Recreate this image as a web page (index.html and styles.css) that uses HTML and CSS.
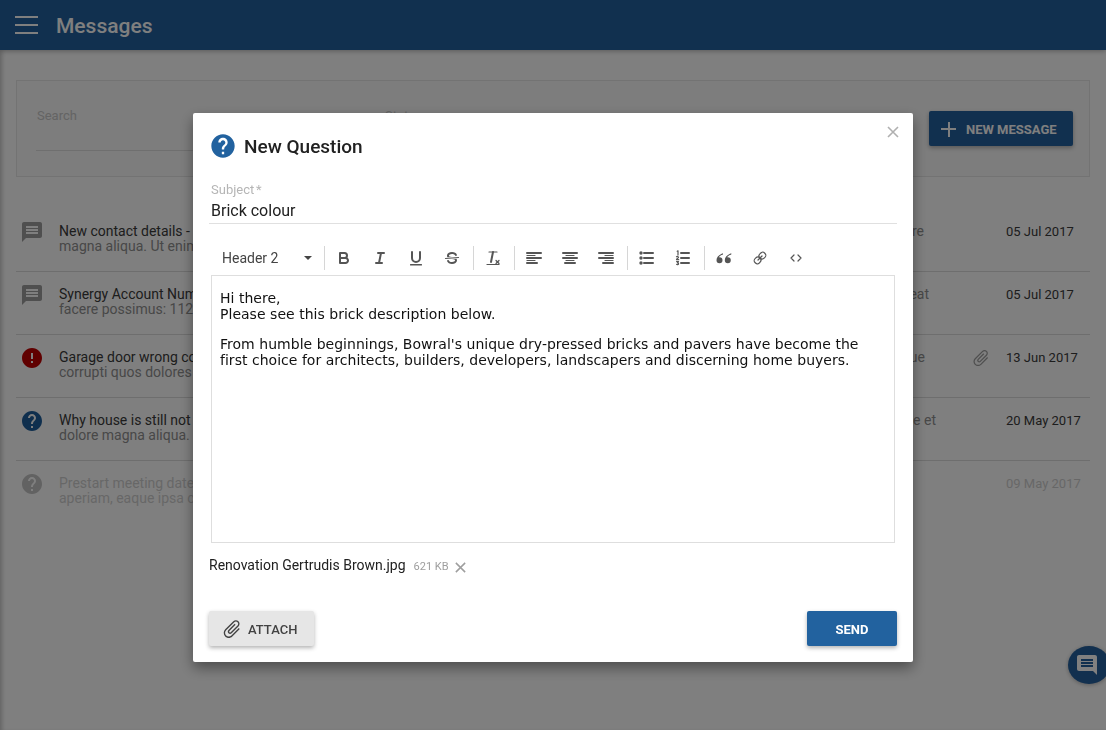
FILE: index.html
```html
<!DOCTYPE html>
<html lang="en">
<head>
<meta charset="utf-8">
<title>Messages</title>
<link rel="stylesheet" href="styles.css">
</head>
<body>
<svg class="defs" aria-hidden="true">
  <symbol id="i-chat" viewBox="0 0 24 24"><path d="M20 2H4c-1.1 0-1.99.9-1.99 2L2 22l4-4h14c1.1 0 2-.9 2-2V4c0-1.1-.9-2-2-2zm-2 12H6v-2h12v2zm0-3H6V9h12v2zm0-3H6V6h12v2z"/></symbol>
  <symbol id="i-help" viewBox="0 0 24 24"><path d="M12 2C6.48 2 2 6.48 2 12s4.48 10 10 10 10-4.48 10-10S17.52 2 12 2zm1 17h-2v-2h2v2zm2.07-7.75l-.9.92C13.45 12.9 13 13.5 13 15h-2v-.5c0-1.1.45-2.1 1.17-2.83l1.24-1.26c.37-.36.59-.86.59-1.41 0-1.1-.9-2-2-2s-2 .9-2 2H8c0-2.21 1.79-4 4-4s4 1.79 4 4c0 .88-.36 1.68-.93 2.25z"/></symbol>
  <symbol id="i-error" viewBox="0 0 24 24"><path d="M12 2C6.48 2 2 6.48 2 12s4.48 10 10 10 10-4.48 10-10S17.52 2 12 2zm1 15h-2v-2h2v2zm0-4h-2V7h2v6z"/></symbol>
  <symbol id="i-attach" viewBox="0 0 24 24"><path transform="rotate(45 12 12)" d="M16.5 6v11.5c0 2.21-1.79 4-4 4s-4-1.79-4-4V5c0-1.38 1.12-2.5 2.5-2.5s2.5 1.12 2.5 2.5v10.5c0 .55-.45 1-1 1s-1-.45-1-1V6H10v9.5c0 1.38 1.12 2.5 2.5 2.5s2.5-1.12 2.5-2.5V5c0-2.21-1.79-4-4-4S7 2.79 7 5v12.5c0 3.04 2.46 5.5 5.5 5.5s5.5-2.46 5.5-5.5V6h-1.5z"/></symbol>
  <symbol id="i-close" viewBox="0 0 14 14"><path d="M2 2l10 10M12 2L2 12" fill="none" stroke="currentColor" stroke-width="1.6"/></symbol>
</svg>

<div class="page">
  <header class="topbar">
    <span class="burger"><i></i><i></i><i></i></span>
    <h1 class="page-title">Messages</h1>
  </header>

  <main class="content">
    <section class="filters">
      <div class="field field-search"><span class="field-label">Search</span></div>
      <div class="field field-status"><span class="field-label">Status</span></div>
      <button class="btn btn-new" type="button"><span class="plus"></span>NEW MESSAGE</button>
    </section>

    <ul class="messages">
      <li class="message">
        <svg class="msg-icon icon-grey"><use href="#i-chat"/></svg>
        <div class="msg-body">
          <div class="msg-title">New contact details -</div>
          <div class="msg-text"><span class="msg-sub">magna aliqua. Ut enim</span><span class="msg-tail tail-a">re</span></div>
        </div>
        <div class="msg-clip"></div>
        <time class="msg-date">05 Jul 2017</time>
      </li>
      <li class="message">
        <svg class="msg-icon icon-grey"><use href="#i-chat"/></svg>
        <div class="msg-body">
          <div class="msg-title">Synergy Account Num</div>
          <div class="msg-text"><span class="msg-sub">facere possimus: 112</span><span class="msg-tail tail-b">eat</span></div>
        </div>
        <div class="msg-clip"></div>
        <time class="msg-date">05 Jul 2017</time>
      </li>
      <li class="message">
        <svg class="msg-icon icon-red"><use href="#i-error"/></svg>
        <div class="msg-body">
          <div class="msg-title">Garage door wrong co</div>
          <div class="msg-text"><span class="msg-sub">corrupti quos dolores</span><span class="msg-tail tail-c">ue</span></div>
        </div>
        <div class="msg-clip"><svg class="clip-icon"><use href="#i-attach"/></svg></div>
        <time class="msg-date">13 Jun 2017</time>
      </li>
      <li class="message">
        <svg class="msg-icon icon-blue"><use href="#i-help"/></svg>
        <div class="msg-body">
          <div class="msg-title">Why house is still not</div>
          <div class="msg-text"><span class="msg-sub">dolore magna aliqua.</span><span class="msg-tail tail-d">e et</span></div>
        </div>
        <div class="msg-clip"></div>
        <time class="msg-date">20 May 2017</time>
      </li>
      <li class="message message-read">
        <svg class="msg-icon icon-faint"><use href="#i-help"/></svg>
        <div class="msg-body">
          <div class="msg-title">Prestart meeting date</div>
          <div class="msg-text"><span class="msg-sub">aperiam, eaque ipsa c</span></div>
        </div>
        <div class="msg-clip"></div>
        <time class="msg-date">09 May 2017</time>
      </li>
    </ul>
  </main>
</div>

<div class="overlay"></div>

<button class="fab" type="button" aria-label="Chat"><svg class="fab-icon"><use href="#i-chat"/></svg></button>

<div class="modal" role="dialog">
  <button class="modal-close" type="button" aria-label="Close"><svg class="close-icon"><use href="#i-close"/></svg></button>
  <div class="modal-head">
    <svg class="modal-icon"><use href="#i-help"/></svg>
    <h2 class="modal-title">New Question</h2>
  </div>

  <div class="subject">
    <label class="subject-label">Subject *</label>
    <div class="subject-value">Brick colour</div>
  </div>

  <div class="toolbar">
    <div class="picker"><span>Header 2</span><span class="caret"></span></div>
    <span class="sep"></span>
    <svg class="tb tb-first" viewBox="0 0 18 18"><path class="s" d="M5,4H9.5A2.5,2.5,0,0,1,12,6.5v0A2.5,2.5,0,0,1,9.5,9H5V4Z"/><path class="s" d="M5,9h5.5A2.5,2.5,0,0,1,13,11.5v0A2.5,2.5,0,0,1,10.5,14H5V9Z"/></svg>
    <svg class="tb" viewBox="0 0 18 18"><line class="s" x1="7" x2="13" y1="4" y2="4"/><line class="s" x1="5" x2="11" y1="14" y2="14"/><line class="s" x1="8" x2="10" y1="14" y2="4"/></svg>
    <svg class="tb" viewBox="0 0 18 18"><path class="s" d="M5,3V9a4,4,0,0,0,4,4H9a4,4,0,0,0,4-4V3"/><rect class="f" height="1.4" rx=".5" width="12" x="3" y="15"/></svg>
    <svg class="tb" viewBox="0 0 18 18"><line class="t" x1="15.5" x2="2.5" y1="8.5" y2="9.5"/><path class="f" d="M9.007,8C6.542,7.791,6,7.519,6,6.5,6,5.792,7.283,5,9,5c1.571,0,2.765.679,2.969,1.309a1,1,0,0,0,1.9-.617C13.356,4.106,11.354,3,9,3,6.2,3,4,4.538,4,6.5a3.2,3.2,0,0,0,.5,1.843Z"/><path class="f" d="M8.984,10C11.457,10.208,12,10.479,12,11.5c0,.708-1.283,1.5-3,1.5-1.571,0-2.765-.679-2.969-1.309a1,1,0,1,0-1.9.617C4.644,13.894,6.646,15,9,15c2.8,0,5-1.538,5-3.5a3.2,3.2,0,0,0-.5-1.843Z"/></svg>
    <span class="sep"></span>
    <svg class="tb tb-first" viewBox="0 0 18 18"><line class="t" x1="5" x2="13" y1="3" y2="3"/><line class="s" x1="9" x2="7" y1="3" y2="13"/><line class="t" x1="3" x2="15" y1="15.5" y2="15.5"/><line class="t" x1="12" x2="15" y1="11.5" y2="14.5"/><line class="t" x1="15" x2="12" y1="11.5" y2="14.5"/></svg>
    <span class="sep"></span>
    <svg class="tb tb-first" viewBox="0 0 18 18"><line class="s" x1="2" x2="16" y1="9" y2="9"/><line class="s" x1="2" x2="12" y1="14" y2="14"/><line class="s" x1="2" x2="16" y1="4" y2="4"/><line class="t" x1="2" x2="10" y1="6.5" y2="6.5"/><line class="t" x1="2" x2="10" y1="11.5" y2="11.5"/></svg>
    <svg class="tb" viewBox="0 0 18 18"><line class="s" x1="2" x2="16" y1="9" y2="9"/><line class="s" x1="4" x2="14" y1="14" y2="14"/><line class="s" x1="2" x2="16" y1="4" y2="4"/><line class="t" x1="5" x2="13" y1="6.5" y2="6.5"/><line class="t" x1="5" x2="13" y1="11.5" y2="11.5"/></svg>
    <svg class="tb" viewBox="0 0 18 18"><line class="s" x1="16" x2="2" y1="9" y2="9"/><line class="s" x1="16" x2="6" y1="14" y2="14"/><line class="s" x1="16" x2="2" y1="4" y2="4"/><line class="t" x1="8" x2="16" y1="6.5" y2="6.5"/><line class="t" x1="8" x2="16" y1="11.5" y2="11.5"/></svg>
    <span class="sep"></span>
    <svg class="tb tb-first" viewBox="0 0 18 18"><line class="s" x1="6" x2="15" y1="4" y2="4"/><line class="s" x1="6" x2="15" y1="9" y2="9"/><line class="s" x1="6" x2="15" y1="14" y2="14"/><circle class="f" cx="3" cy="4" r="1.7"/><circle class="f" cx="3" cy="9" r="1.7"/><circle class="f" cx="3" cy="14" r="1.7"/></svg>
    <svg class="tb" viewBox="0 0 18 18"><line class="s" x1="7" x2="15" y1="4" y2="4"/><line class="s" x1="7" x2="15" y1="9" y2="9"/><line class="s" x1="7" x2="15" y1="14" y2="14"/><path class="t" d="M3.2 2.2L4 1.8V6M2.5 7.8c.3-.5 2-.5 2 .4 0 .8-2 1.400-2 2.500h2.200M2.600 12.600h1.900l-1 1.300c.8 0 1.100.4 1.100.9 0 .9-1.500 1-2 .5"/></svg>
    <span class="sep"></span>
    <svg class="tb tb-first" viewBox="0 0 18 18"><path class="f" d="M8 4.200C4.600 5.300 1.500 7.800 1.500 11.300a3 3 0 1 0 3-3c-.3 0-.5 0-.7.100C4.400 7.200 5.800 6.200 8 5.500z"/><path class="f" d="M16.300 4.200c-3.400 1.100-6.500 3.600-6.500 7.100a3 3 0 1 0 3-3c-.3 0-.5 0-.7.100.6-1.200 2-2.200 4.200-2.900z"/></svg>
    <svg class="tb" viewBox="0 0 18 18"><g transform="matrix(-1 0 0 1 18 0)"><line class="t" x1="7" x2="11" y1="7" y2="11"/><path class="t" d="M8.900,4.577a3.476,3.476,0,0,1,.36,4.679A3.476,3.476,0,0,1,4.577,8.900C3.185,7.500,2.035,6.400,4.217,4.217S7.500,3.185,8.900,4.577Z"/><path class="t" d="M13.423,9.100a3.476,3.476,0,0,0-4.679-.36,3.476,3.476,0,0,0,.36,4.679c1.392,1.392,2.500,2.542,4.679.36S14.815,10.500,13.423,9.100Z"/></g></svg>
    <svg class="tb" viewBox="0 0 18 18"><polyline class="t" points="7 6 4 9 7 12"/><polyline class="t" points="11 6 14 9 11 12"/></svg>
  </div>

  <div class="editor">
    <p>Hi there,<br>Please see this brick description below.</p>
    <p>From humble beginnings, Bowral's unique dry-pressed bricks and pavers have become the first choice for architects, builders, developers, landscapers and discerning home buyers.</p>
  </div>

  <div class="attachment">
    <span class="file-name">Renovation Gertrudis Brown.jpg</span>
    <span class="file-size">621 KB</span>
    <svg class="file-remove"><use href="#i-close"/></svg>
  </div>

  <div class="modal-actions">
    <button class="btn btn-attach" type="button"><svg class="attach-icon"><use href="#i-attach"/></svg>ATTACH</button>
    <button class="btn btn-send" type="button">SEND</button>
  </div>
</div>
</body>
</html>
```

FILE: styles.css
```css
* { box-sizing: border-box; }

html, body {
  margin: 0;
  height: 100%;
  overflow: hidden;
}

body {
  font-family: Roboto, "Liberation Sans", sans-serif;
  font-size: 14px;
  color: #212121;
  background: #fff;
}

.defs { display: none; }

.page {
  height: 730px;
  box-shadow: inset 4px 0 4px -2px rgba(0, 0, 0, .22);
}

.topbar {
  display: flex;
  align-items: center;
  height: 50px;
  padding-left: 15px;
  background: #23609e;
  box-shadow: 0 1px 5px rgba(0, 0, 0, .3);
}

.burger {
  display: flex;
  flex-direction: column;
  gap: 6px;
  width: 23px;
}

.burger i {
  display: block;
  height: 2px;
  background: #fff;
}

.page-title {
  margin: 2px 0 0 18px;
  font-size: 21px;
  font-weight: 500;
  color: #fff;
}

.content { padding: 30px 16px 0; }

.filters {
  display: flex;
  align-items: flex-start;
  height: 97px;
  padding: 30px 16px 0 19px;
  border: 1px solid #e6e6e6;
  background: #fafafa;
}

.field {
  height: 40px;
  border-bottom: 1px solid #dedede;
  color: #c8c8c8;
  font-size: 13px;
}

.field-search { width: 330px; }
.field-status { width: 330px; margin-left: 18px; }
.field-label { display: block; margin: -3px 0 0 1px; }

.btn {
  display: flex;
  align-items: center;
  justify-content: center;
  height: 35px;
  padding: 1px 0 0;
  border: 0;
  border-radius: 2px;
  font-family: inherit;
  font-size: 13px;
  font-weight: 700;
  box-shadow: 0 2px 4px rgba(0, 0, 0, .3);
}

.btn-new {
  justify-content: flex-start;
  width: 144px;
  margin-left: auto;
  padding-left: 12px;
  gap: 10px;
  background: #23609e;
  color: #fff;
}

.plus {
  width: 15px;
  height: 15px;
  background:
    linear-gradient(#fff, #fff) center / 15px 2px no-repeat,
    linear-gradient(#fff, #fff) center / 2px 15px no-repeat;
}

.messages {
  margin: 32px 0 0;
  padding: 0;
  list-style: none;
}

.message {
  display: flex;
  align-items: flex-start;
  height: 63px;
  padding-top: 14px;
  border-bottom: 1px solid #dcdcdc;
}

.message:last-child { border-bottom: 0; }

.msg-icon {
  flex: none;
  width: 24px;
  height: 24px;
  margin: -3px 0 0 4px;
}

.icon-grey { fill: #9e9e9e; }
.icon-red { fill: #c00000; }
.icon-blue { fill: #1f5f9c; }
.icon-faint { fill: #c4c4c4; }

.msg-body {
  width: 890px;
  margin-left: 15px;
  line-height: 16px;
  white-space: nowrap;
}

.msg-title { color: #3a3a3a; }

.msg-text {
  display: flex;
  justify-content: space-between;
  margin-top: -17px;
  color: #909090;
}

.msg-sub { margin-top: 17px; line-height: 15px; }
.msg-tail { margin-top: 1px; line-height: 16px; }
.tail-a { padding-right: 25px; }
.tail-b { padding-right: 20px; }
.tail-c { padding-right: 24px; }
.tail-d { padding-right: 13px; }

.msg-clip {
  flex: none;
  display: flex;
  justify-content: center;
  width: 40px;
  height: 16px;
  margin-left: 12px;
}

.clip-icon {
  width: 20px;
  height: 20px;
  margin-top: -1px;
  fill: #9e9e9e;
}

.msg-date {
  flex: none;
  width: 84px;
  margin: 1px 0 0 5px;
  font-size: 13px;
  line-height: 16px;
  color: #3a3a3a;
}

.message-read .msg-title,
.message-read .msg-sub,
.message-read .msg-date { color: #cfcfcf; }

.overlay {
  position: fixed;
  inset: 0;
  background: rgba(0, 0, 0, .5);
}

.fab {
  position: fixed;
  left: 1068px;
  top: 646px;
  display: flex;
  align-items: center;
  width: 42px;
  height: 38px;
  padding: 0 0 0 7px;
  border: 0;
  border-radius: 50%;
  background: #12304f;
  box-shadow: 0 1px 4px rgba(0, 0, 0, .3);
}

.fab-icon {
  width: 24px;
  height: 24px;
  fill: #808080;
  transform: scaleX(-1);
}

.modal {
  position: fixed;
  left: 193px;
  top: 113px;
  display: flex;
  flex-direction: column;
  width: 720px;
  height: 549px;
  padding: 20px 16px 16px;
  border-radius: 2px;
  background: #fff;
  box-shadow: 0 6px 14px rgba(0, 0, 0, .4);
}

.modal-close {
  position: absolute;
  right: 13px;
  top: 12px;
  width: 14px;
  height: 14px;
  padding: 0;
  border: 0;
  background: none;
  color: #b0b0b0;
}

.close-icon {
  display: block;
  width: 14px;
  height: 14px;
}

.modal-head {
  display: flex;
  align-items: center;
  height: 26px;
}

.modal-icon {
  width: 28px;
  height: 28px;
  fill: #22629f;
}

.modal-title {
  margin: 0 0 0 7px;
  font-size: 19px;
  font-weight: 500;
  color: #212121;
}

.subject {
  height: 42px;
  margin-top: 23px;
  border-bottom: 1px solid #e0e0e0;
}

.subject-label {
  display: block;
  padding: 1px 0 0 2px;
  font-size: 13px;
  line-height: 14px;
  word-spacing: -1.5px;
  color: #b5b5b5;
}

.subject-value {
  margin-top: 4px;
  padding-left: 2px;
  font-size: 16px;
  line-height: 20px;
  color: #212121;
}

.toolbar {
  display: flex;
  align-items: center;
  height: 24px;
  margin-top: 22px;
  padding-left: 13px;
  color: #444;
}

.picker {
  display: flex;
  align-items: center;
  justify-content: space-between;
  width: 90px;
  font-size: 14px;
  color: #444;
}

.caret {
  width: 0;
  height: 0;
  border-left: 4px solid transparent;
  border-right: 4px solid transparent;
  border-top: 4px solid #444;
}

.sep {
  flex: none;
  width: 1px;
  height: 24px;
  margin-left: 12px;
  background: #d6d6d6;
}

.tb {
  flex: none;
  width: 18px;
  height: 18px;
  margin-left: 18px;
  fill: none;
}

.tb-first { margin-left: 10px; }

.s { fill: none; stroke: #555; stroke-width: 2; stroke-linecap: round; stroke-linejoin: round; }
.t { fill: none; stroke: #555; stroke-width: 1.2; stroke-linecap: round; stroke-linejoin: round; }
.f { fill: #555; stroke: none; }

.editor {
  height: 268px;
  margin: 5px 2px 0;
  padding: 14px 8px;
  border: 1px solid #dedede;
  font-family: "DejaVu Sans", Verdana, sans-serif;
  font-size: 14px;
  line-height: 16px;
  letter-spacing: .025px;
  color: #111;
}

.editor p { margin: 0 0 14px; }

.attachment {
  display: flex;
  align-items: center;
  height: 16px;
  margin-top: 14px;
}

.file-name { font-size: 14px; color: #212121; }

.file-size {
  margin-left: 8px;
  padding-top: 3px;
  font-size: 11px;
  color: #9e9e9e;
}

.file-remove {
  width: 13px;
  height: 13px;
  margin: 4px 0 0 5px;
  color: #9e9e9e;
}

.modal-actions {
  display: flex;
  justify-content: space-between;
  margin-top: auto;
}

.btn-attach {
  justify-content: flex-start;
  width: 105px;
  padding-left: 12px;
  gap: 5px;
  background: #e6e6e6;
  color: #424242;
  font-weight: 500;
}

.attach-icon {
  width: 22px;
  height: 22px;
  fill: #424242;
}

.btn-send {
  width: 90px;
  background: #22629f;
  color: #fff;
}
```
